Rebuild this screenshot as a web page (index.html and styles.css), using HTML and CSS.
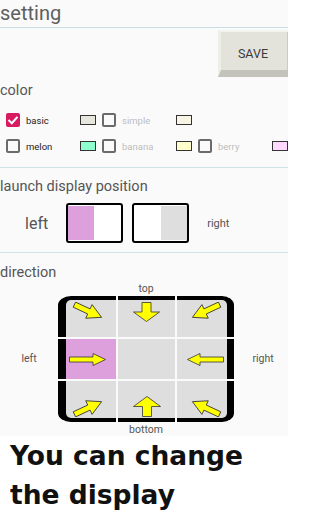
FILE: index.html
```html
<!DOCTYPE html>
<html>
<head>
<meta charset="utf-8">
<link rel="stylesheet" href="styles.css">
</head>
<body>
<div class="app">
  <div class="title">setting</div>
  <div class="save-row"><div class="save">SAVE</div></div>

  <div class="section-label color-label">color</div>
  <div class="colors">
    <div class="opt">
      <span class="cb checked"><svg width="14" height="14" viewBox="0 0 14 14"><polyline points="2.5,7 5.8,10.2 11.5,3.8" fill="none" stroke="#fff" stroke-width="2"/></svg></span>
      <span class="name">basic</span><span class="sw sw-basic"></span>
    </div>
    <div class="opt">
      <span class="cb"></span>
      <span class="name off">simple</span><span class="sw sw-simple"></span>
    </div>
    <div class="opt empty"></div>
    <div class="opt">
      <span class="cb"></span>
      <span class="name">melon</span><span class="sw sw-melon"></span>
    </div>
    <div class="opt">
      <span class="cb"></span>
      <span class="name off">banana</span><span class="sw sw-banana"></span>
    </div>
    <div class="opt">
      <span class="cb"></span>
      <span class="name off">berry</span><span class="sw sw-berry"></span>
    </div>
  </div>

  <div class="section launch">
    <div class="section-label">launch display position</div>
    <div class="launch-row">
      <span class="launch-left">left</span>
      <div class="lbox"><div class="fill fill-pink"></div></div>
      <div class="lbox lbox-right"><div class="fill fill-gray"></div></div>
      <span class="launch-right">right</span>
    </div>
  </div>

  <div class="section direction">
    <div class="section-label">direction</div>
    <div class="dir">
      <div class="dir-top">top</div>
      <div class="dir-left">left</div>
      <div class="dir-grid">
        <div class="cell c-t c-l tl lcol"><svg width="32" height="18" viewBox="-16 -9 32 18"><path transform="rotate(25)" d="M-15,-2.8 H1 V-7.5 L15,0 L1,7.5 V2.8 H-15 Z" class="arr"/></svg></div>
        <div class="cell c-t"><svg width="27" height="20" viewBox="0 0 27 20"><path d="M9,0.5 H18 V10 H26.5 L13.5,19.5 L0.5,10 H9 Z" class="arr"/></svg></div>
        <div class="cell c-t c-r tr rcol"><svg width="32" height="18" viewBox="-16 -9 32 18"><path transform="rotate(155)" d="M-15,-2.8 H1 V-7.5 L15,0 L1,7.5 V2.8 H-15 Z" class="arr"/></svg></div>
        <div class="cell c-l lcol pink"><svg width="37" height="13" viewBox="0 0 37 13"><path d="M0.5,4 H24 V0.5 L36.5,6.5 L24,12.5 V9 H0.5 Z" class="arr"/></svg></div>
        <div class="cell"></div>
        <div class="cell c-r rcol"><svg width="37" height="13" viewBox="0 0 37 13"><path d="M36.5,4 H13 V0.5 L0.5,6.5 L13,12.5 V9 H36.5 Z" class="arr"/></svg></div>
        <div class="cell c-b c-l bl lcol"><svg width="32" height="18" viewBox="-16 -9 32 18"><path transform="rotate(-25)" d="M-15,-2.8 H1 V-7.5 L15,0 L1,7.5 V2.8 H-15 Z" class="arr"/></svg></div>
        <div class="cell c-b"><svg width="28" height="21" viewBox="0 0 28 21"><path d="M9.5,20.5 H18.5 V10.5 H27.5 L14,0.5 L0.5,10.5 H9.5 Z" class="arr"/></svg></div>
        <div class="cell c-b c-r br rcol"><svg width="32" height="18" viewBox="-16 -9 32 18"><path transform="rotate(-155)" d="M-15,-2.8 H1 V-7.5 L15,0 L1,7.5 V2.8 H-15 Z" class="arr"/></svg></div>
      </div>
      <div class="dir-right">right</div>
      <div class="dir-bottom">bottom</div>
    </div>
  </div>
</div>
<div class="caption">You can change<br>the display</div>
</body>
</html>
```

FILE: styles.css
```css
html { background: #fff; }
body {
  margin: 0;
  width: 288px;
  overflow: hidden;
  font-family: Roboto, "Noto Sans", sans-serif;
}
.app {
  background: #fafafa;
}
.title {
  font-size: 20px;
  line-height: 27px;
  height: 27px;
  color: #5f5f5f;
  border-bottom: 1px solid #c9dde4;
}
.save-row {
  display: flex;
  justify-content: flex-end;
  padding-top: 2px;
  margin-right: -3px;
}
.save {
  box-sizing: border-box;
  width: 73px;
  height: 47px;
  background: #e3e3db;
  border-top: 2px solid #f4f4ee;
  border-left: 3px solid #eeeee8;
  border-bottom: 7px solid #c3c3bb;
  border-right: 4px solid #cbcbc3;
  display: flex;
  align-items: center;
  justify-content: center;
  padding: 5px 2px 0 0;
  font-size: 12.5px;
  color: #3a3a3a;
}
.section-label {
  font-size: 14.5px;
  line-height: 20px;
  color: #555;
}
.color-label { margin-top: 4px; }
.colors {
  margin-top: 6px;
  display: grid;
  grid-template-columns: 96px 96px 96px;
  grid-auto-rows: 26px;
}
.opt {
  display: flex;
  align-items: center;
  padding-left: 6px;
}
.cb {
  box-sizing: border-box;
  width: 14px;
  height: 14px;
  border: 2px solid #6b6b6b;
  border-radius: 2px;
  display: flex;
  align-items: center;
  justify-content: center;
}
.cb.checked {
  background: #d81b60;
  border-color: #d81b60;
}
.cb.checked svg { margin: -2px; }
.name {
  flex: 1;
  margin-left: 6px;
  font-size: 9.5px;
  color: #222;
}
.name.off { color: #bdbdbd; }
.sw {
  box-sizing: border-box;
  width: 16px;
  height: 10px;
  border: 1px solid #333;
}
.sw-basic { background: #e6e6dd; }
.sw-simple { background: #f8f4e6; }
.sw-melon { background: #8fffd0; }
.sw-banana { background: #ffffcc; }
.sw-berry { background: #ffd9ff; }

.section { border-top: 1px solid #cfe3ea; }
.launch { margin-top: 8px; padding-top: 9px; }
.launch-row {
  margin-top: 6px;
  height: 40px;
  display: flex;
  align-items: center;
  padding-left: 25px;
}
.launch-left {
  font-size: 16px;
  color: #555;
  margin-right: 18px;
}
.lbox {
  box-sizing: border-box;
  width: 57px;
  height: 40px;
  border: 2px solid #000;
  border-radius: 3px;
  background: #fff;
  padding: 1px 1px 1px 0;
  display: flex;
}
.lbox + .lbox { margin-left: 9px; }
.lbox-right { justify-content: flex-end; padding: 1px 0 1px 1px; }
.fill { width: 26px; }
.fill-pink { background: #dda0dd; }
.fill-gray { background: #dedede; }
.launch-right {
  margin-left: 18px;
  font-size: 11px;
  color: #555;
}

.direction { margin-top: 9px; padding-top: 10px; }
.dir {
  display: grid;
  grid-template-columns: 58px 176px 1fr;
  grid-template-areas:
    ". top ."
    "left grid right"
    ". bottom .";
  align-items: center;
}
.dir-top, .dir-bottom, .dir-left, .dir-right {
  font-size: 10.5px;
  line-height: 12px;
  color: #555;
  text-align: center;
}
.dir-top { grid-area: top; margin: 0 0 1px; }
.dir-bottom { grid-area: bottom; margin: 2px 0 0; }
.dir-left { grid-area: left; }
.dir-right { grid-area: right; padding-left: 4px; }
.dir-grid {
  grid-area: grid;
  display: grid;
  grid-template-columns: 58px 57px 57px;
  grid-template-rows: 41px 40px 41px;
  gap: 2px;
}
.cell {
  background: #dedede;
  display: flex;
  justify-content: center;
  align-items: center;
}
.cell.pink { background: #dda0dd; }
.c-l { border-left: 8px solid #000; }
.c-r { border-right: 7px solid #000; }
.c-t { border-top: 4px solid #000; align-items: flex-start; padding-top: 2px; }
.c-b { border-bottom: 4px solid #000; align-items: flex-end; padding-bottom: 1px; }
.lcol { padding-right: 7px; }
.rcol { padding-left: 7px; }
.tl { border-top-left-radius: 13px 9px; }
.tr { border-top-right-radius: 12px 9px; }
.bl { border-bottom-left-radius: 13px 9px; }
.br { border-bottom-right-radius: 12px 9px; }
.arr {
  fill: #ffff00;
  stroke: #333;
  stroke-width: 0.8;
}
.caption {
  background: #fff;
  padding: 0 10px;
  font-family: "DejaVu Sans", sans-serif;
  font-weight: bold;
  font-size: 26.5px;
  line-height: 39px;
  color: #111;
}
```
